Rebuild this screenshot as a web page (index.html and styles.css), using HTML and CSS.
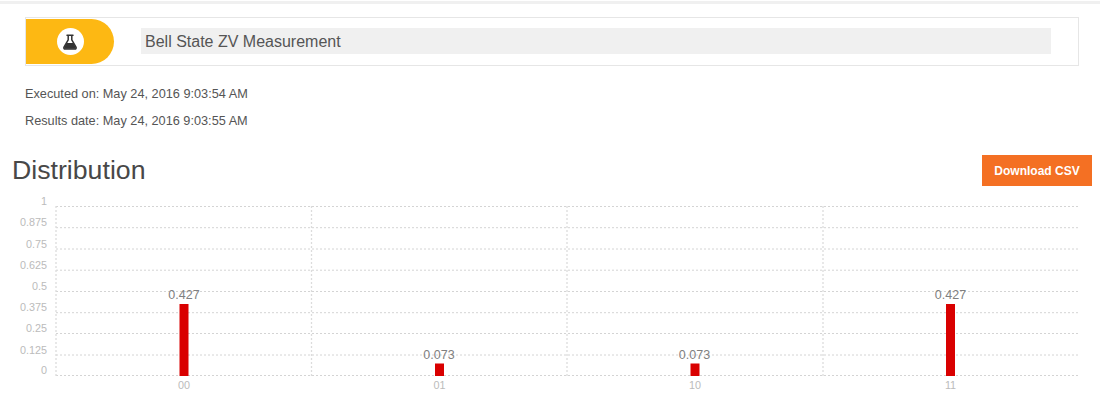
FILE: index.html
```html
<!DOCTYPE html>
<html lang="en">
<head>
<meta charset="utf-8">
<title>Bell State ZV Measurement</title>
<link rel="stylesheet" href="styles.css">
</head>
<body>
<div class="topline"></div>
<main class="page">
  <section class="card">
    <div class="pill">
      <span class="badge">
        <svg class="flask" viewBox="0 0 16 16" width="16" height="16" aria-hidden="true">
          <path class="flask-glass" d="M5 1.2h6M6.2 1.2v4.6L2 13.2c-.5 1 .1 1.8 1.1 1.8h9.8c1 0 1.6-.8 1.1-1.8L9.8 5.8V1.2"/>
          <path class="flask-fill" d="M4.6 9h6.8l2.3 4.3c.4.8 0 1.5-.9 1.5H3.200c-.9 0-1.300-.7-.9-1.500z"/>
        </svg>
      </span>
    </div>
    <div class="title">Bell State ZV Measurement</div>
  </section>
  <div class="meta">
    <p class="meta-line">Executed on: May 24, 2016 9:03:54 AM</p>
    <p class="meta-line">Results date: May 24, 2016 9:03:55 AM</p>
  </div>
  <div class="heading-row">
    <h2 class="heading">Distribution</h2>
    <button class="download">Download CSV</button>
  </div>
  <svg class="chart" width="1100" height="223" viewBox="0 190 1100 223" role="img" aria-label="Distribution chart">
    <g class="grid">
      <path d="M56 206.500H1078M56 227.700H1078M56 249H1078M56 270.200H1078M56 291.500H1078M56 312.700H1078M56 333.500H1078M56 355H1078M56 375.500H1078"/>
      <path class="grid-v" d="M56 206V376M311.500 206V376M567 206V376M823 206V376"/>
    </g>
    <g class="y-labels">
      <text x="47" y="205">1</text>
      <text x="47" y="226">0.875</text>
      <text x="47" y="248">0.75</text>
      <text x="47" y="269">0.625</text>
      <text x="47" y="290">0.5</text>
      <text x="47" y="311">0.375</text>
      <text x="47" y="332">0.25</text>
      <text x="47" y="354">0.125</text>
      <text x="47" y="374">0</text>
    </g>
    <g class="bars">
      <rect x="179.500" y="304" width="9" height="72"/>
      <rect x="435" y="363.500" width="9" height="12.500"/>
      <rect x="690.500" y="363.500" width="9" height="12.500"/>
      <rect x="946" y="304" width="9" height="72"/>
    </g>
    <g class="values">
      <text x="184" y="299">0.427</text>
      <text x="439" y="359">0.073</text>
      <text x="694.500" y="359">0.073</text>
      <text x="950.500" y="299">0.427</text>
    </g>
    <g class="x-labels">
      <text x="184" y="389">00</text>
      <text x="439.500" y="389">01</text>
      <text x="695" y="389">10</text>
      <text x="950.500" y="389">11</text>
    </g>
  </svg>
</main>
</body>
</html>
```

FILE: styles.css
```css
* { box-sizing: border-box; }
html, body { margin: 0; padding: 0; background: #fff; overflow: hidden; }
body { font-family: "Liberation Sans", Arial, sans-serif; color: #555; width: 1100px; height: 413px; }
.topline { height: 3px; margin-top: 1px; background: #f0f0f0; }
.page { display: flex; flex-direction: column; }
.card {
  display: flex;
  align-items: center;
  margin: 13px 21px 0 25px;
  height: 49px;
  border: 1px solid #e6e6e6;
  padding-right: 27px;
  background: #fff;
}
.pill {
  flex: none;
  width: 88px;
  height: 45px;
  background: #fdb813;
  border-radius: 0 22.5px 22.5px 0;
  display: flex;
  align-items: center;
  justify-content: center;
}
.badge {
  width: 27px;
  height: 27px;
  border-radius: 50%;
  background: #fff;
  display: flex;
  align-items: center;
  justify-content: center;
}
.flask { display: block; }
.flask-glass { fill: none; stroke: #333; stroke-width: 1.500; stroke-linecap: round; stroke-linejoin: round; }
.flask-fill { fill: #333; }
.title {
  flex: 1;
  margin: 0 0 1px 27px;
  height: 26px;
  line-height: 28px;
  padding-left: 4px;
  background: #f0f0f0;
  font-size: 16px;
  color: #555;
}
.meta { margin: 20px 0 0 25px; display: flex; flex-direction: column; gap: 12px; }
.meta-line { margin: 0; font-size: 12.730px; line-height: 15px; color: #555; }
.heading-row {
  display: flex;
  align-items: center;
  justify-content: space-between;
  margin-top: 27px;
  padding: 0 8px 0 12px;
  height: 31px;
}
.heading { margin: 0; font-size: 26.700px; font-weight: 400; color: #484848; line-height: 31px; }
.download {
  width: 110px;
  height: 31px;
  border: 0;
  padding: 0;
  background: #f47023;
  color: #fff;
  font-family: inherit;
  font-size: 12px;
  font-weight: 700;
}
.chart { display: block; margin-top: 4px; flex: none; }
.grid path { fill: none; stroke: #d4d4d4; stroke-width: 1; stroke-dasharray: 2 2; }
.grid .grid-v { stroke: #dcdcdc; stroke-width: 1.300; }
.y-labels text { font-size: 10.800px; fill: #bbb; text-anchor: end; }
.x-labels text { font-size: 10.800px; fill: #bbb; text-anchor: middle; }
.values text { font-size: 12.500px; fill: #808080; text-anchor: middle; }
.bars rect { fill: #d90000; }
```
